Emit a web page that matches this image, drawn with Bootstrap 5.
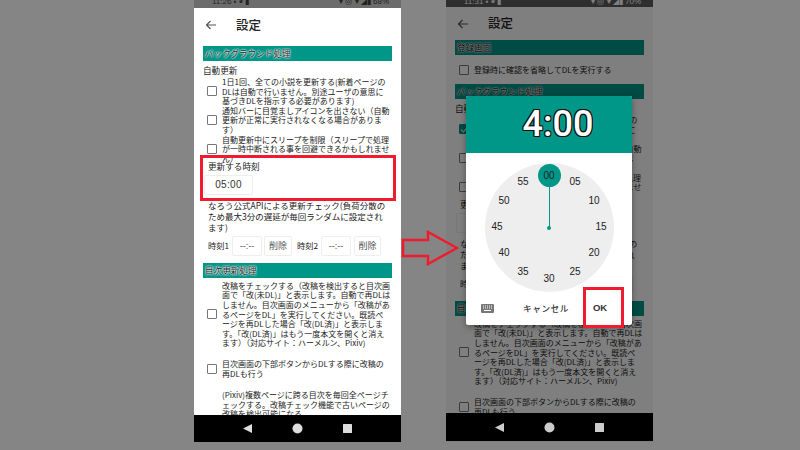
<!DOCTYPE html>
<html lang="ja"><head><meta charset="utf-8">
<link href="https://cdn.jsdelivr.net/npm/bootstrap@5.3.0/dist/css/bootstrap.min.css" rel="stylesheet">
<style>
html,body{margin:0;height:450px;overflow:hidden;background:#858585}
body{font-family:"Noto Sans CJK JP","Liberation Sans",sans-serif;position:relative;color:#222}
.stage{padding-left:194px;gap:45px;height:442px}
.phone{width:207px;height:442px;background:#fff;position:relative;overflow:hidden}
.stat{height:8px;background:#6c6c6c;color:#222;font:8px/8px "Liberation Sans",sans-serif;padding:0 12px 0 18px;overflow:hidden}
.stat span{margin-top:-2px}
.stat.dim{height:7px;background:#5c5c5c;color:#fff}
.hdr{height:38px;padding:0 0 4px 10px;gap:18px;color:#333}
.hdr b{font-size:12.500px;font-weight:500;color:#222}
.hdr.up{height:33px;padding-bottom:0}
.body{padding:0 9px;font-size:8px;line-height:9.600px;height:369px;overflow:hidden}
.body.tall{height:373px}
.sect{height:15px;background:#009688;font-size:8.600px;line-height:15px;padding-left:2px;color:#222;text-shadow:0 0 1.500px #fff,0 0 1.500px #fff,0 0 2px #fff}
.lbl{font-size:8.600px;line-height:12px;height:16px;padding-top:3px}
.opt{gap:5px;padding:0 1px 0 4px;min-height:28.500px}
.opt.solo{height:29px}
.opt.first{margin-top:3px}
.opt.auto{min-height:0}
.opt.g11{margin-top:11px}
.opt.g12{margin-top:12px}
.box{flex:0 0 10px;height:10px;border:1px solid #777;border-radius:1px;background:transparent}
.box.on{background:#009688;border-color:#009688;position:relative}
.box.on::after{content:"";position:absolute;left:2px;top:.5px;width:4px;height:6px;border:solid #fff;border-width:0 1.200px 1.200px 0;transform:rotate(40deg)}
.opt p{margin:0}
.timebl{padding-left:5px;margin-top:-3px;height:40px;font-size:8.600px;line-height:12px}
.tbtn{display:block;width:49px;height:20px;margin:3px 0 0 -4px;border:1px solid #eee;border-radius:2px;background:#fff;font:10px/18px "Liberation Sans",sans-serif;text-align:center;color:#333;letter-spacing:.3px}
.note{padding:0 3px 0 5px;font-size:8.500px;line-height:10.600px;height:35.500px}
.trow{gap:2px;height:20px;padding-left:5px;margin-bottom:7px;font-size:8.200px}
.trow i{font-style:normal;width:22px}
.cell{border:1px solid #eee;border-radius:2px;height:20px;line-height:18px;font-size:9px;text-align:center;color:#555;font-family:"Liberation Sans","Noto Sans CJK JP",sans-serif}
.cell.a{width:30px}.cell.b{width:28px}.cell.c{width:27px;margin-left:1px}
.spc{margin-left:3px}
.navb{height:27px;background:#000;position:absolute;left:0;right:0;bottom:0;gap:39px}
.navb.up{height:28px;bottom:1px}
.scrim{position:absolute;inset:0;background:rgba(0,0,0,.5);pointer-events:none}
.dlg{position:absolute;left:20px;top:96px;width:166px;height:229px;background:#fff;border-radius:2px;box-shadow:0 2px 6px rgba(0,0,0,.35);overflow:hidden}
.dhead{height:57px;padding-left:18px;background:#009688;font:500 36px/57px "Roboto","Liberation Sans",sans-serif;text-align:center;color:#fff;text-shadow:-1px -1px 0 #111,1px -1px 0 #111,-1px 1px 0 #111,1px 1px 0 #111,0 1px 0 #111,1px 0 0 #111,-1px 0 0 #111,0 -1px 0 #111}
.face{position:relative;width:129px;height:129px;border-radius:50%;background:#eee;margin:10px auto 0}
.face span{position:absolute;width:24px;height:14px;margin:-7px 0 0 -12px;text-align:center;font:10px/14px "Liberation Sans",sans-serif;color:#222}
.face .sel{width:23px;height:23px;margin:-11.500px 0 0 -11.500px;line-height:23px;border-radius:50%;background:#009688;color:#222}
.hand{position:absolute;left:64px;top:22px;width:1.600px;height:43px;background:#009688}
.hub{position:absolute;left:62.800px;top:62.800px;width:4px;height:4px;border-radius:50%;background:#009688}
.acts{height:24px;margin-top:4px;padding:0 0 0 15px;font-size:8.600px;color:#333}
.acts .t{margin-left:29px;letter-spacing:.6px;font-weight:500}
.acts .k{margin-left:24px;font-size:9.500px;font-weight:700;font-family:"Liberation Sans",sans-serif}
.redbox{position:absolute;border:3px solid #ee1c2e;pointer-events:none}
.rb1{left:200px;top:155px;width:196px;height:46px}
.rb2{left:583px;top:287px;width:41px;height:41px}
.arr{position:absolute;left:401px;top:230px}
</style></head>
<body>
<div class="stage d-flex">
  <section class="phone d-flex flex-column">
    <div class="stat d-flex justify-content-between"><span>11:26 ▪ ◉ ▮</span><span>▾ ◎ ▾ ◢▮ 68%</span></div>
    <div class="hdr d-flex align-items-center">
      <svg width="14" height="14" viewBox="0 0 14 14"><path d="M12 7H2.500M6.500 3 2.500 7l4 4" fill="none" stroke="#555" stroke-width="1.200"/></svg>
      <b>設定</b>
    </div>
    <div class="body">
      <div class="sect">バックグラウンド処理</div>
      <div class="lbl">自動更新</div>
      <div class="opt d-flex align-items-center"><span class="box"></span><p>1日1回、全ての小説を更新する(新着ページのDLは自動で行いません。別途ユーザの意思に基づきDLを指示する必要があります)</p></div>
      <div class="opt d-flex align-items-center"><span class="box"></span><p>通知バーに目覚ましアイコンを出さない（自動更新が正常に実行されなくなる場合があります）</p></div>
      <div class="opt d-flex align-items-center"><span class="box"></span><p>自動更新中にスリープを制限（スリープで処理が一時中断される事を回避できるかもしれません）</p></div>
      <div class="timebl">更新する時刻<span class="tbtn">05:00</span></div>
      <div class="note">なろう公式APIによる更新チェック(負荷分散のため最大3分の遅延が毎回ランダムに設定されます)</div>
      <div class="trow d-flex align-items-center"><i>時刻1</i><span class="cell a">--:--</span><span class="cell b">削除</span><i class="spc">時刻2</i><span class="cell a">--:--</span><span class="cell c">削除</span></div>
      <div class="sect">目次更新処理</div>
      <div class="opt first d-flex align-items-center"><span class="box"></span><p>改稿をチェックする（改稿を検出すると目次画面で「改(未DL)」と表示します。自動で再DLはしません。目次画面のメニューから「改稿があるページをDL」を実行してください。既読ページを再DLした場合「改(DL済)」と表示します。「改(DL済)」はもう一度本文を開くと消えます）（対応サイト：ハーメルン、Pixiv)</p></div>
      <div class="opt auto g11 d-flex align-items-center"><span class="box"></span><p>目次画面の下部ボタンからDLする際に改稿の再DLも行う</p></div>
      <div class="opt auto g12 d-flex align-items-center"><span class="box invisible"></span><p>(Pixiv)複数ページに跨る目次を毎回全ページチェックする。改稿チェック機能で古いページの改稿を検出可能になる。</p></div>
    </div>
    <div class="navb d-flex align-items-center justify-content-center">
      <svg width="11" height="11" viewBox="0 0 11 11"><path d="M10 1v9L1 5.500z" fill="#ddd"/></svg>
      <svg width="11" height="11" viewBox="0 0 11 11"><circle cx="5.500" cy="5.500" r="5" fill="#ddd"/></svg>
      <svg width="11" height="11" viewBox="0 0 11 11"><rect x="1" y="1" width="9" height="9" rx=".5" fill="#ddd"/></svg>
    </div>
  </section>
  <section class="phone d-flex flex-column">
    <div class="stat dim d-flex justify-content-between"><span>11:31 ▪ ◉ ▮</span><span>▾ ◎ ▾ ◢▮ 70%</span></div>
    <div class="hdr up d-flex align-items-center">
      <svg width="14" height="14" viewBox="0 0 14 14"><path d="M12 7H2.500M6.500 3 2.500 7l4 4" fill="none" stroke="#555" stroke-width="1.200"/></svg>
      <b>設定</b>
    </div>
    <div class="body tall">
      <div class="sect">登録画面</div>
      <div class="opt solo d-flex align-items-center"><span class="box"></span><p>登録時に確認を省略してDLを実行する</p></div>
      <div class="sect">バックグラウンド処理</div>
      <div class="lbl">自動更新</div>
      <div class="opt d-flex align-items-center"><span class="box on"></span><p>1日1回、全ての小説を更新する(新着ページのDLは自動で行いません。別途ユーザの意思に基づきDLを指示する必要があります)</p></div>
      <div class="opt d-flex align-items-center"><span class="box"></span><p>通知バーに目覚ましアイコンを出さない（自動更新が正常に実行されなくなる場合があります）</p></div>
      <div class="opt d-flex align-items-center"><span class="box"></span><p>自動更新中にスリープを制限（スリープで処理が一時中断される事を回避できるかもしれません）</p></div>
      <div class="timebl">更新する時刻<span class="tbtn">04:00</span></div>
      <div class="note">なろう公式APIによる更新チェック(負荷分散のため最大3分の遅延が毎回ランダムに設定されます)</div>
      <div class="trow d-flex align-items-center"><i>時刻1</i><span class="cell a">--:--</span><span class="cell b">削除</span><i class="spc">時刻2</i><span class="cell a">--:--</span><span class="cell c">削除</span></div>
      <div class="sect">目次更新処理</div>
      <div class="opt first d-flex align-items-center"><span class="box"></span><p>改稿をチェックする（改稿を検出すると目次画面で「改(未DL)」と表示します。自動で再DLはしません。目次画面のメニューから「改稿があるページをDL」を実行してください。既読ページを再DLした場合「改(DL済)」と表示します。「改(DL済)」はもう一度本文を開くと消えます）（対応サイト：ハーメルン、Pixiv)</p></div>
      <div class="opt auto g11 d-flex align-items-center"><span class="box"></span><p>目次画面の下部ボタンからDLする際に改稿の再DLも行う</p></div>
    </div>
    <div class="scrim"></div>
    <div class="navb up d-flex align-items-center justify-content-center">
      <svg width="11" height="11" viewBox="0 0 11 11"><path d="M10 1v9L1 5.500z" fill="#ccc"/></svg>
      <svg width="11" height="11" viewBox="0 0 11 11"><circle cx="5.500" cy="5.500" r="5" fill="#ccc"/></svg>
      <svg width="11" height="11" viewBox="0 0 11 11"><rect x="1" y="1" width="9" height="9" rx=".5" fill="#ccc"/></svg>
    </div>
    <div class="dlg">
      <div class="dhead">4:00</div>
      <div class="face">
        <div class="hand"></div><div class="hub"></div>
        <span class="sel" style="left:64.500px;top:12.500px">00</span>
        <span style="left:90.500px;top:19px">05</span>
        <span style="left:109.500px;top:38px">10</span>
        <span style="left:116.500px;top:64px">15</span>
        <span style="left:109.500px;top:90px">20</span>
        <span style="left:90.500px;top:109px">25</span>
        <span style="left:64.500px;top:116px">30</span>
        <span style="left:38.500px;top:109px">35</span>
        <span style="left:19.500px;top:90px">40</span>
        <span style="left:12.500px;top:64px">45</span>
        <span style="left:19.500px;top:38px">50</span>
        <span style="left:38.500px;top:19px">55</span>
      </div>
      <div class="acts d-flex align-items-center">
        <svg width="13" height="9" viewBox="0 0 13 9"><rect width="13" height="9" rx="1" fill="#777"/><path d="M2 2h1M4 2h1M6 2h1M8 2h1M10 2h1M2 4h1M4 4h1M6 4h1M8 4h1M10 4h1M3 6.500h7" stroke="#fff" stroke-width="1"/></svg>
        <span class="t">キャンセル</span><span class="k">OK</span>
      </div>
    </div>
  </section>
</div>
<div class="redbox rb1"></div>
<div class="redbox rb2"></div>
<svg class="arr" width="58" height="36" viewBox="0 0 58 36"><path d="M2 10H27V2L56 18 27 34V26H2z" fill="none" stroke="#ee1c2e" stroke-width="2.500"/></svg>
</body></html>
